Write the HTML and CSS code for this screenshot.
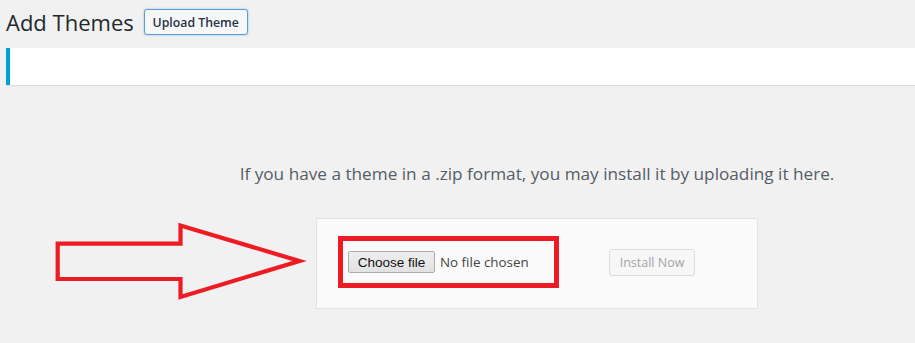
FILE: index.html
```html
<!DOCTYPE html>
<html lang="en">
<head>
<meta charset="utf-8">
<title>Add Themes</title>
<link rel="stylesheet" href="styles.css">
</head>
<body>
<div class="wrap">
  <div class="head">
    <h1 class="title">Add Themes</h1>
    <a class="page-action" href="#">Upload Theme</a>
  </div>
  <div class="notice"></div>
  <div class="upload">
    <p class="help">If you have a theme in a .zip format, you may install it by uploading it here.</p>
    <div class="card">
      <div class="mark">
        <span class="choose">Choose file</span>
        <span class="nofile">No file chosen</span>
      </div>
      <span class="install">Install Now</span>
    </div>
  </div>
  <svg class="arrow" width="915" height="343" viewBox="0 0 915 343" aria-hidden="true">
    <polygon points="57.7,243.7 180.5,243.7 180.5,225.5 299.5,261 180.5,297 180.5,279 57.7,279" fill="none" stroke="#ed1c24" stroke-width="4.2" stroke-linejoin="miter" stroke-miterlimit="10"/>
  </svg>
</div>
</body>
</html>
```

FILE: styles.css
```css
html, body {
  margin: 0;
  padding: 0;
}
body {
  background: #f1f1f1;
  font-family: "Open Sans", "Noto Sans", sans-serif;
  color: #23282d;
  overflow: hidden;
  width: 915px;
  height: 343px;
}
.wrap {
  position: relative;
  width: 915px;
  height: 343px;
}
.head {
  display: flex;
  align-items: center;
  padding: 9px 0 0 6px;
  height: 26px;
}
.title {
  margin: 0;
  font-size: 22px;
  font-weight: 400;
  line-height: 26px;
  color: #23282d;
}
.page-action {
  margin-left: 10px;
  box-sizing: border-box;
  height: 26px;
  width: 104px;
  display: flex;
  align-items: center;
  justify-content: center;
  border: 1px solid #5b9dd9;
  border-radius: 3px;
  background: #f7f7f7;
  box-shadow: 0 0 2px rgba(30, 140, 190, 0.5);
  color: #1f3347;
  font-size: 12.3px;
  font-weight: 600;
  text-decoration: none;
}
.notice {
  margin: 13px 0 0 6px;
  height: 37px;
  background: #fff;
  border-left: 4px solid #00a0d2;
  box-shadow: 0 1px 1px rgba(0, 0, 0, 0.08);
}
.upload {
  margin-left: 237px;
  width: 600px;
}
.help {
  margin: 77px 0 0;
  text-align: center;
  color: #555d66;
  font-size: 17.2px;
  line-height: 24px;
}
.card {
  box-sizing: border-box;
  width: 442px;
  height: 91px;
  margin: 32px auto 0;
  padding: 17px 0 0 21px;
  background: #fafafa;
  border: 1px solid #e3e3e3;
  display: flex;
  align-items: flex-start;
}
.mark {
  box-sizing: border-box;
  width: 221px;
  height: 52px;
  border: 5px solid #ed1c24;
  padding-left: 5px;
  display: flex;
  align-items: center;
}
.choose {
  box-sizing: border-box;
  width: 87px;
  height: 22px;
  display: flex;
  align-items: center;
  justify-content: center;
  background: linear-gradient(#eeeeee, #e2e2e2);
  border: 1px solid #adadad;
  border-radius: 2px;
  font-family: "Liberation Sans", Arial, sans-serif;
  font-size: 13.5px;
  color: #111;
}
.nofile {
  margin-left: 5px;
  font-size: 13.4px;
  color: #444;
}
.install {
  box-sizing: border-box;
  margin: 13px 0 0 50px;
  width: 86px;
  height: 27px;
  display: flex;
  align-items: center;
  justify-content: center;
  border: 1px solid #dddddd;
  border-radius: 3px;
  background: #f7f7f7;
  color: #a0a5aa;
  font-size: 12.5px;
}
.arrow {
  position: absolute;
  left: 0;
  top: 0;
  pointer-events: none;
}
```
